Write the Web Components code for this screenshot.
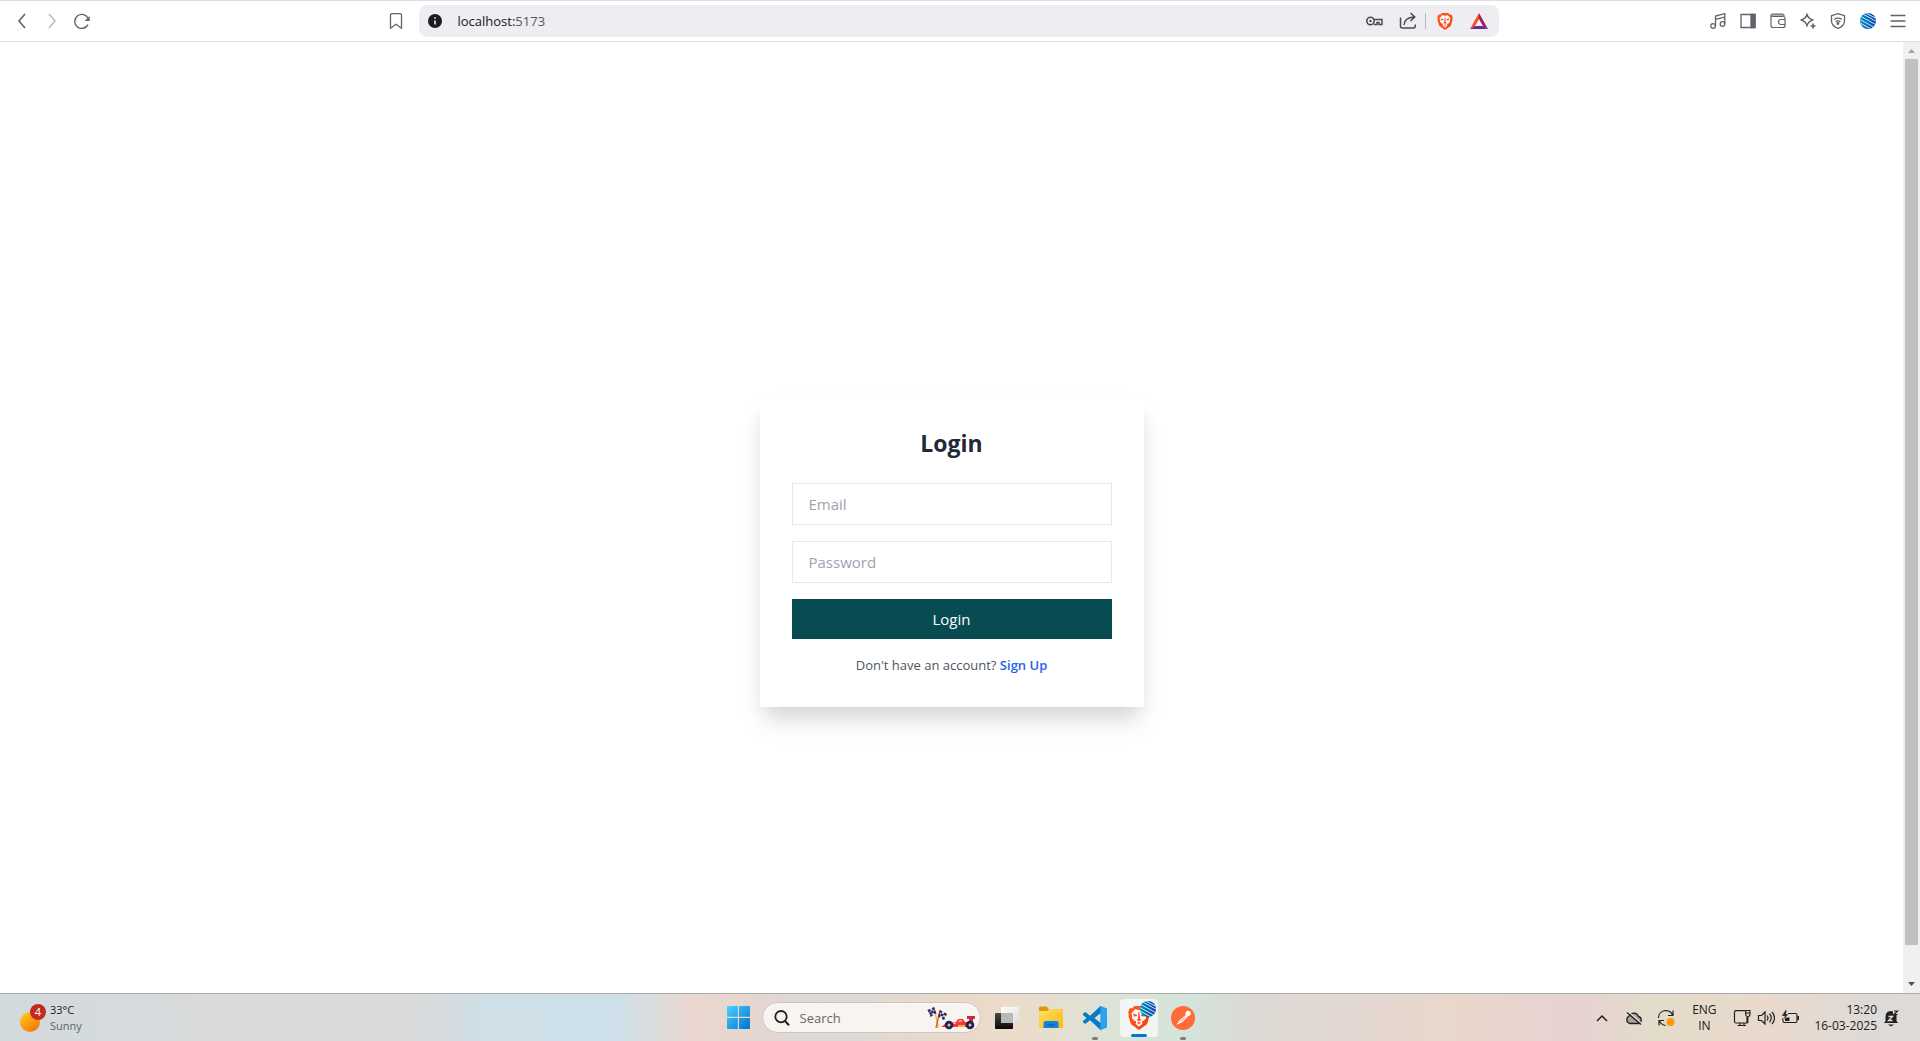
<!DOCTYPE html>
<html lang="en">
<head>
<meta charset="utf-8">
<title>Login</title>
<style>
html, body { height: 100%; margin: 0; overflow: hidden; }
body { font-family: "Open Sans", "Noto Sans", sans-serif; background: #fff; }
</style>
</head>
<body>
<desktop-shell>
  <browser-toolbar slot="toolbar"></browser-toolbar>
  <login-card heading="Login">
    <form-field label="Email" type="email"></form-field>
    <form-field label="Password" type="password"></form-field>
    <span slot="prompt">Don't have an account?</span>
  </login-card>
  <scroll-track slot="scroll"></scroll-track>
  <task-bar slot="taskbar"></task-bar>
</desktop-shell>
<script>
const define = (name, html, setup) => customElements.define(name, class extends HTMLElement {
  constructor() {
    super();
    const t = document.createElement('template');
    t.innerHTML = html;
    this.attachShadow({ mode: 'open', delegatesFocus: true }).append(t.content.cloneNode(true));
  }
  connectedCallback() { if (setup) setup(this, this.shadowRoot); }
});

const icons = {
  back: [16, 16, '<path d="M11 1 5 8l6 7" stroke-width="1.6"/>'],
  forward: [16, 16, '<path d="m5 1 6 7-6 7" stroke-width="1.6"/>'],
  reload: [16, 16, '<path d="M14.2 5.6A7 7 0 1 0 14 11.600" stroke-width="1.400"/><path d="M15.700 3v5h-5z" fill="currentColor" stroke="none"/>'],
  bookmark: [16, 16, '<path d="M2.500 2.200Q2.500.7 4 .7h8q1.500 0 1.500 1.500v13L8 11.200l-5.500 4z" stroke-width="1.300"/>'],
  info: [16, 16, '<circle cx="8" cy="8" r="7" fill="#1b1b22" stroke="none"/><path d="M8 7.500v4M8 4.200v1.500" stroke="#fff" stroke-width="1.500"/>'],
  key: [18, 18, '<circle cx="5.500" cy="9" r="3.700" stroke-width="1.600"/><circle cx="5.500" cy="9" r="1.200" fill="currentColor" stroke="none"/><path d="M9.200 7.400H17v5h-3v-2h-2v2H9" stroke-width="1.500"/>'],
  share: [18, 18, '<path d="M1.500 5.500V14q0 2 2 2h11q1.800 0 1.800-2v-1.500" stroke-width="1.500"/><path d="M5 13q.5-7.500 10-8M11.500 1l4.300 4-4.300 4" stroke-width="1.500"/>'],
  lion: [24, 26, '<defs><linearGradient id="o" x2="1" y2="1"><stop stop-color="#ff5a1f"/><stop offset="1" stop-color="#f4420a"/></linearGradient></defs><path d="M7 0h10l2.400 2.500 2.600-.3 1.800 4.600-.7 2 .4 1.700-2.600 9L12 26 3.100 19.500.500 10.500l.4-1.700-.7-2L2 2.200l2.600.3z" fill="url(#o)" stroke="none"/><path d="m7.500 3.500 4.500.8 4.500-.8L20.300 8l-1 3.500.5 1.500-2.600 3-2.200.6.7 2.600L12 22.500l-3.700-3.300.7-2.600-2.200-.6-2.600-3 .5-1.500-1-3.500z" fill="#fff" stroke="none"/><path d="m5.500 8.200 4.600 1.300-.8 1.700-2.800.2zm13 0-4.600 1.300.8 1.700 2.800.2zM11.400 6.500h1.200l.5 7 1.500 1.700-2.600 1.500-2.600-1.500 1.500-1.700zM9.500 18.200l2.500-.8 2.500.8-2.500 1.700z" fill="#fb542b" stroke="none"/>'],
  bat: [18, 16, '<path d="M9 0 0 16l5-3 4-7z" fill="#ff4724" stroke="none"/><path d="m9 0 9 16-5-3-4-7z" fill="#9e1f63" stroke="none"/><path d="m0 16 5-3h8l5 3z" fill="#662d91" stroke="none"/>'],
  music: [16, 16, '<circle cx="3.100" cy="13" r="2.300"/><circle cx="12.500" cy="11" r="2.300"/><path d="M5.500 13V3l9.300-2.300V11M5.500 6.300l9.300-2.200"/>'],
  panel: [16, 16, '<path d="M1 1.500h14v13H1z"/><path d="M11 1.500h4v13h-4z" fill="currentColor"/>'],
  wallet: [16, 16, '<path d="M1 3q0-2 2-2h9q2 0 2 2M1 3v9.500q0 2 2 2h10q2 0 2-2V5q0-1.500-2-1.500H3Q1 3.500 1 2M15 6.500h-4a2.500 2.500 0 0 0 0 5h4" stroke-width="1.200"/><path d="M2 1h11v2.500H2z" fill="currentColor" opacity=".5" stroke="none"/>'],
  sparkle: [16, 16, '<path d="M7 1q1 4.800 6 6-5 1.200-6 6-1-4.800-6-6 5-1.200 6-6z" stroke-linejoin="round"/><path d="M13 10.500v5M10.500 13h5" stroke-width="1.700"/>'],
  vpn: [16, 16, '<path d="m8 .7 6.500 2v5.500q0 4.300-6.500 7.300-6.500-3-6.500-7.300V2.700z"/><path d="M4.200 6.500q3.800-2.600 7.600 0M5.600 8.600q2.400-1.500 4.800 0"/><circle cx="8" cy="10.500" r=".8" fill="currentColor"/>'],
  globe: [16, 16, '<defs><linearGradient id="g" x2="1"><stop stop-color="#0097b7"/><stop offset="1" stop-color="#1438b4"/></linearGradient><clipPath id="c"><circle cx="8" cy="8" r="8"/></clipPath></defs><g clip-path="url(#c)"><path d="M0 0h16v16H0z" fill="url(#g)" stroke="none"/><path d="M4-1 17 6M1 0l16 8.800M-1 2.500l18 9.800M-1 6l18 9.800M-1 9.500 13 17" stroke="#bfe9fb" stroke-width="1"/></g>'],
  menu: [16, 16, '<path d="M.500 2.500h15M.500 8h15M.500 13.500h15" stroke-width="1.400"/>'],
  windows: [24, 24, '<defs><linearGradient id="w" x2="1" y2="1"><stop stop-color="#4bd3ff"/><stop offset="1" stop-color="#0070d1"/></linearGradient></defs><path d="M1 0H11.300v11.300H0V1Q0 0 1 0zM12.500 0H23q1 0 1 1v10.300H12.500zM0 12.500h11.300V24H1q-1 0-1-1zM12.500 12.500H24V23q0 1-1 1H12.500z" fill="url(#w)" stroke="none"/>'],
  search: [16, 16, '<circle cx="7" cy="6.700" r="5.700" stroke-width="1.800"/><path d="m11 11 4 4.200" stroke-width="2"/>'],
  race: [48, 24, '<path d="m7 2 4.500 20" stroke="#f2b632" stroke-width="1.400"/><path d="M13 4 9 22" stroke="#d9662b" stroke-width="1.400"/><g stroke="none"><path d="m7 1-6.500 3 3 6.500L9.500 8z" fill="#d5d6ea"/><path d="m13 4 7 4-3 6-5.500-3z" fill="#d5d6ea"/><path d="M.500 4 3 2.900l1 2.200-2.500 1.100zM5 2l2-1 1 2.300-2.200.9zM4 5.100l2-.9 1 2.300-2 .9zM2 6.700l2-1 1 2.200-2 1zM7.800 3.300l1.700 4.200-2 .6-.7-2zM3 9.500l2-1.300 1 1.300-2.500 1.500zM13 4l2.300 1.300-1 2-2-1.100zM17.500 6.500 20 8l-1 2-2.500-1.400zM14.500 7.300l2.200 1.200-1 2.100-2.200-1.200zM12.500 6.300l1 3.200-1 2-1.500-.8zM16 10.500l2.200 1.200L17 14l-2.200-1.200z" fill="#28234f"/></g><path d="m14 21 7-5h8l2-3h5l2 3h8v5z" fill="#ee3b35" stroke="none"/><path d="M40 10h8v3h-2v3h-4v-3h-2z" fill="#c52e38" stroke="none"/><path d="M20 16h9v2h-9zM32 14h3v2h-4z" fill="#ff8f84" stroke="none"/><path d="M31 20h7" stroke="#f6ac3c" stroke-width="2"/><g fill="#29214c" stroke="none"><circle cx="22" cy="19" r="4.300"/><circle cx="43" cy="19" r="4.300"/></g><g fill="#c9c2df" stroke="none"><circle cx="22" cy="19" r="1.500"/><circle cx="43" cy="19" r="1.500"/></g>'],
  taskview: [24, 24, '<defs><linearGradient id="d" y2="1" x2="0"><stop stop-color="#484848"/><stop offset="1" stop-color="#080808"/></linearGradient><linearGradient id="l" y2="1" x2="1"><stop stop-color="#fff"/><stop offset="1" stop-color="#ddd"/></linearGradient></defs><rect y="7" width="18" height="16" rx="1" fill="url(#d)" stroke="none"/><rect x="6" y="1" width="18" height="16" rx="1" fill="url(#l)" stroke="none"/><path d="M6 7h12v10H6z" fill="#b9b9b9" stroke="none"/>'],
  folder: [24, 24, '<defs><linearGradient id="f" x2="1" y2="1"><stop stop-color="#ffdf68"/><stop offset="1" stop-color="#f8b915"/></linearGradient></defs><path d="M0 2q0-1.500 1.500-1.500h6L10 3h12q2 0 2 2v5H0z" fill="#d99b09" stroke="none"/><path d="M0 5h8l2-2h12.500Q24 3 24 4.500V21q0 1-1 1H1q-1 0-1-1z" fill="url(#f)" stroke="none"/><path d="M4.500 22v-5q0-2 2-2h11q2 0 2 2v5z" fill="#1681d8" stroke="none"/><path d="M8 19h8" stroke="#075aaa" stroke-width="1.200"/>'],
  code: [24, 24, '<path d="m17.500 0 6.500 2.800v18.400L17.500 24 7 14.300l-4.500 3.500L0 16.400v-1.300L3.600 12 0 8.900V7.500l2.500-1.400L7 9.700zM17.700 7 11.500 12l6.200 5z" fill="#087bc6" fill-rule="evenodd" stroke="none"/><path d="m17.500 0 6.500 2.800v18.400L17.500 24z" fill="#28a5ee" stroke="none"/>'],
  postman: [24, 24, '<circle cx="12" cy="12" r="12" fill="#ff6c37" stroke="none"/><path d="m5.500 18.800 3-4.500 6.500-5.500 2 1.800-6.200 6z" fill="#fff" stroke="none"/><circle cx="17.200" cy="7.300" r="2.600" fill="#fff" stroke="none"/><path d="m8.500 16 6.500-5.300" stroke="#ff8a60" stroke-width=".8"/>'],
  up: [16, 16, '<path d="m3 11 5-5 5 5" stroke-width="1.500"/>'],
  cloud: [18, 16, '<path d="M4.500 13.500a4 4 0 0 1-.2-7.500 5 5 0 0 1 9.200.5 3.600 3.600 0 0 1 0 7z" fill="#a6a39e" stroke-width="1.300"/><path d="m3 1.500 13.500 12" stroke="#eadfd0" stroke-width="1.500"/><path d="m2 2.500 14 12" stroke-width="1.300"/>'],
  sync: [18, 18, '<path d="M1.500 9A7.300 7.300 0 0 1 15.500 6M16 1.500v5h-5M2 16.500v-5h5M2.500 12q2 4 6 4.500" stroke-width="1.200"/><circle cx="13.500" cy="13" r="4" fill="#ff980b" stroke="none"/>'],
  network: [18, 18, '<path d="M12 1.700H3Q1.500 1.700 1.500 3v9.500q0 1.500 1.500 1.500h11V8M4.500 16.500H13M7 14v2.500M11 14v2.500M14.800 7v7M12.700 1.500h4.200V6q0 1.500-2 1.500t-2.200-1.500zM12.700 4H17" stroke-width="1.200"/>'],
  volume: [18, 18, '<path d="M1.500 6.500h3L8 3v12l-3.500-3.500h-3zM10 6.500q2 2.500 0 5M12.500 4.700q3.500 4.300 0 8.600M15 3q5 6 0 12" stroke-width="1.200"/>'],
  battery: [18, 18, '<path d="M7 4.500h7.500q1.500 0 1.500 1.500v6q0 1.500-1.500 1.500h-11Q2 13.500 2 12V9" stroke-width="1.200"/><path d="M17.200 7v4" stroke-width="1.600"/><path d="M4 8.500h4.500V12H4z" fill="currentColor" stroke="none"/><path d="m4.500 1-4 6h3l-1 4 5-6H5l1-4z" fill="currentColor" stroke="#eadbd0" stroke-width=".5"/>'],
  bell: [16, 18, '<path d="M2.500 12V8q0-6 5.500-6 1 0 2 .5V6h3.500v6l1.500 2H1zM5 15.500h6L8 17.500z" fill="currentColor" stroke="none"/><path d="M11 2h3.500L11 5.500h3.500" stroke-width="1.200"/><path d="M5.500 7.500h4l-4 4h4" stroke="#e0dcd9" stroke-width="1.300"/>']
};

define('ui-icon', `<style>:host{display:block;flex:none;line-height:0}svg{display:block;fill:none;stroke:currentColor;stroke-width:1.3}</style>`, (el, root) => {
  const [w, h, art] = icons[el.getAttribute('name')];
  const width = +(el.getAttribute('width') || w);
  const holder = document.createElement('template');
  holder.innerHTML = `<svg aria-hidden="true" viewBox="0 0 ${w} ${h}" width="${width}" height="${Math.round(width * h / w)}">${art}</svg>`;
  root.append(holder.content);
});

define('icon-button', `<style>
:host{display:block;flex:none;width:var(--button-width,30px);height:var(--button-height,30px)}
button{all:unset;box-sizing:border-box;width:100%;height:100%;display:flex;align-items:center;justify-content:center;cursor:pointer}
</style><button type="button"><slot></slot></button>`, (el, root) => {
  root.querySelector('button').setAttribute('aria-label', el.getAttribute('label'));
});

const button = (name, label, width = '') =>
  `<icon-button label="${label}" class="${name}"><ui-icon name="${name}" width="${width}"></ui-icon></icon-button>`;

define('desktop-shell', `<style>
:host{display:flex;flex-direction:column;height:100%;overflow:hidden}
.view{flex:1;min-height:0;display:flex}
main{flex:1;display:flex;align-items:center;justify-content:center;padding-top:66px}
</style>
<slot name="toolbar"></slot>
<div class="view"><main><slot></slot></main><slot name="scroll"></slot></div>
<slot name="taskbar"></slot>`);

define('browser-toolbar', `<style>
:host{display:grid;flex:none;grid-template-columns:11fr minmax(320px,1114px) 12fr;align-items:center;box-sizing:border-box;height:42px;border-top:1px solid #dedde4;border-bottom:1px solid #e0dfe4;background:#fff;color:#62626b}
.nav,.tools,.middle,.address{display:flex;align-items:center}
.nav{padding-left:7px}
.tools{justify-content:flex-end;padding-right:7px}
.forward{color:#bbbbc1}
.middle{gap:12px}
.bookmark{--button-width:22px}
.address{flex:1;height:32px;padding-right:3px;box-sizing:border-box;background:#ededf2;border-radius:8px;color:#4b4b55;min-width:0}
.address icon-button{--button-width:34px}
.address .info{--button-width:32px}
.url{flex:1;padding-left:6px;font-size:13px;line-height:20px;color:#56565f}
.url b{font-weight:400;color:#17171d}
i{width:1px;height:16px;margin-right:2px;background:#b7b7c0}
</style>
<nav class="nav">${button('back', 'Back')}${button('forward', 'Forward')}${button('reload', 'Reload')}</nav>
<div class="middle">${button('bookmark', 'Bookmark this tab')}
<div class="address">${button('info', 'View site information')}<div class="url"><b>localhost:</b>5173</div>${button('key', 'Manage passwords')}${button('share', 'Share this page')}<i></i>${button('lion', 'Brave Shields', 16)}${button('bat', 'Brave Rewards')}</div></div>
<div class="tools">${button('music', 'Media controls')}${button('panel', 'Sidebar')}${button('wallet', 'Wallet')}${button('sparkle', 'Leo AI')}${button('vpn', 'VPN')}${button('globe', 'Profile')}${button('menu', 'Menu')}</div>`);

define('scroll-track', `<style>
:host{width:17px;background:#f0f0f0;display:flex;flex-direction:column;align-items:center}
svg{display:block;height:17px;flex:none}
.track{flex:1;width:13px;display:flex;flex-direction:column}
.thumb{flex:29;background:#c1c1c1}
.rest{flex:1}
</style>
<svg width="17" viewBox="0 0 17 17"><path d="M5 11h7L8.500 7z" fill="#a3a3a3"/></svg>
<div class="track"><div class="thumb"></div><div class="rest"></div></div>
<svg width="17" viewBox="0 0 17 17"><path d="M5 6h7l-3.500 4z" fill="#505050"/></svg>`);

define('form-field', `<style>
:host{display:block}
input{display:block;box-sizing:border-box;width:100%;height:42px;padding:8px 16px;border:1px solid #e5e7eb;border-radius:0;background:#fff;color:#1f2937;font:inherit;font-size:15px;line-height:24px;outline:0}
input::placeholder{color:#9ca3af;opacity:1}
</style><input>`, (el, root) => {
  const input = root.querySelector('input');
  input.type = el.getAttribute('type');
  input.placeholder = el.getAttribute('label');
  input.setAttribute('aria-label', el.getAttribute('label'));
});

define('login-card', `<style>
:host{display:block;box-sizing:border-box;width:384px;padding:32px;background:#fff;box-shadow:0 20px 25px -5px #0000001a,0 10px 20px -5px #0000001a}
h2{margin:0 0 24px;text-align:center;font-size:23px;line-height:32px;font-weight:700;color:#1f2937}
form{display:flex;flex-direction:column;gap:16px}
button{height:40px;border:0;background:#084c52;color:#fff;font:inherit;font-size:15px;line-height:24px;cursor:pointer}
p{margin:16px 0 0;text-align:center;font-size:13px;line-height:20px;color:#4b5563}
a{color:#2563eb;font-weight:600;text-decoration:none}
</style>
<h2></h2>
<form><slot></slot><button type="submit">Login</button></form>
<p><slot name="prompt"></slot> <a href="#signup">Sign Up</a></p>`, (el, root) => {
  root.querySelector('h2').textContent = el.getAttribute('heading');
});

define('task-bar', `<style>
:host{display:grid;flex:none;overflow:hidden;grid-template-columns:1fr auto 1fr;align-items:center;box-sizing:border-box;height:48px;border-top:1px solid #adadad;color:#202020;font-size:12px;line-height:16px;
background:linear-gradient(90deg,#d2dade 0,#d8dadb 10%,#d9dadb 22%,#cfdfe7 25%,#cde0ea 32%,#ead8d0 36%,#e5d6cf 39%,#dcdad9 43%,#ead9c9 50%,#ebdccb 53%,#dce3d8 58%,#d3e4da 62%,#ddd9d4 65%,#e2d8d4 69%,#e9d7cb 76%,#e7d2d2 82%,#e3dccb 86%,#ead9cc 92%,#dddad8 98%)}
.weather{display:flex;align-items:center;gap:4px;padding-left:20px;font-size:11px}
.weather small{display:block;font-size:11px;color:#60666a}
.sun{display:grid;width:26px;height:28px}
.sun i{align-self:end;width:20px;height:20px;border-radius:50%;background:linear-gradient(145deg,#ffd21a,#f26a05);grid-area:1/1}
.sun b{grid-area:1/1;justify-self:end;width:16px;height:16px;border-radius:50%;background:#c42b1c;color:#fff;font-size:11px;font-weight:400;text-align:center}
.apps{display:flex;align-items:center;--button-width:44px;--button-height:44px}
.windows{--button-width:46px}
.search{display:flex;align-items:center;box-sizing:border-box;width:219px;height:31px;margin-right:4px;padding:0 5px 0 11px;gap:10px;border:1px solid #cfc6c0;border-radius:16px;background:#f7f4f1}
input{all:unset;flex:1;min-width:0;font-size:13px;line-height:20px;color:#222}
input::placeholder{color:#666;opacity:1}
.app{display:grid;width:44px;height:44px}
.app>*{grid-area:1/1}
.app::after{content:"";grid-area:1/1;place-self:end center;width:6px;height:3px;border-radius:2px;background:#7d7d7a}
.active{width:38px;height:38px;margin:0 3px;--button-width:38px;--button-height:38px;background:#f2f5f1;border-radius:4px}
.active::after{width:16px;background:#0078d4}
.active>.globe{place-self:start end;margin:2px;pointer-events:none}
.tray{display:flex;align-items:center;justify-content:flex-end;padding-right:17px;--button-width:24px}
.up,.cloud,.sync{--button-width:32px}
.lang{width:44px;text-align:center}
.network{margin-left:4px}
.clock{text-align:right;margin:0 2px 0 12px}
</style>
<div class="weather"><div class="sun"><i></i><b>4</b></div><div>33°C<small>Sunny</small></div></div>
<div class="apps">${button('windows', 'Start', 23)}
<label class="search"><ui-icon name="search"></ui-icon><input type="search" placeholder="Search" aria-label="Search"><ui-icon name="race"></ui-icon></label>
${button('taskview', 'Task view')}${button('folder', 'File Explorer')}
<div class="app">${button('code', 'Visual Studio Code')}</div>
<div class="app active">${button('lion', 'Brave', 22)}<ui-icon class="globe" name="globe"></ui-icon></div>
<div class="app">${button('postman', 'Postman')}</div></div>
<div class="tray">${button('up', 'Show hidden icons')}${button('cloud', 'OneDrive')}${button('sync', 'Updates')}
<div class="lang">ENG<br>IN</div>${button('network', 'Network')}${button('volume', 'Volume')}${button('battery', 'Battery')}
<div class="clock">13:20<br>16-03-2025</div>${button('bell', 'Notifications')}</div>`);
</script>
</body>
</html>
